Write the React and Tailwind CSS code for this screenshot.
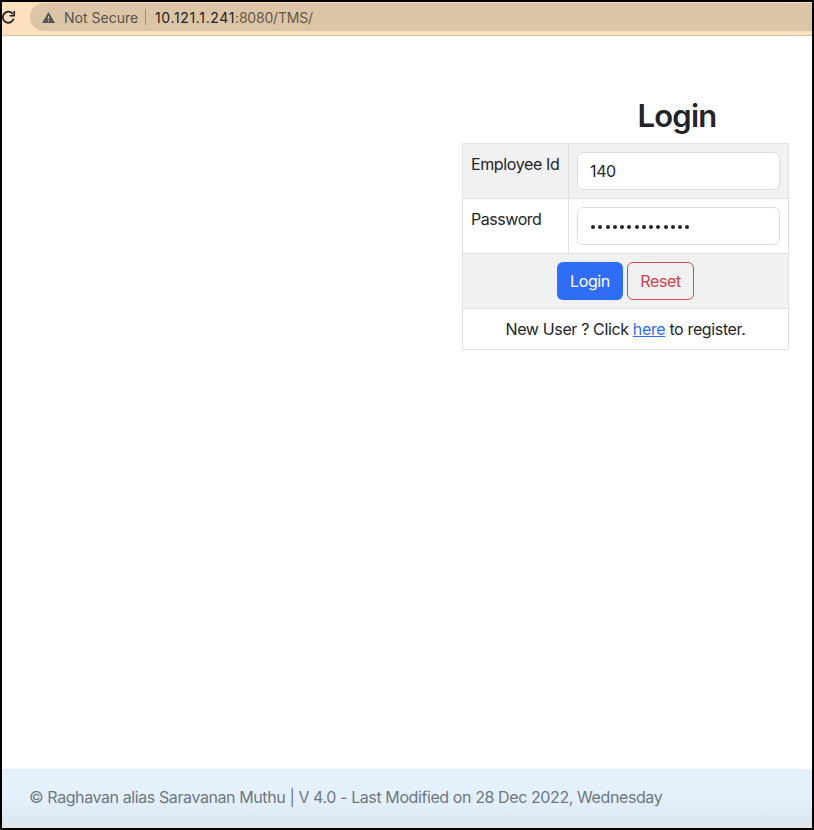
const fieldClass =
  "block h-[38px] w-[203px] rounded-md border border-[#d9dde2] bg-white px-3 text-[16px] leading-6 text-[#212529] outline-none";

function AddressBar() {
  return (
    <div className="flex h-[34px] shrink-0 items-start overflow-hidden border-b border-[#d3c3ac] bg-[#fde0bd]">
      <svg className="-ml-px mt-[7px] h-[16px] w-[15px] shrink-0" viewBox="0 0 15 16" fill="none">
        <path d="M11.8 5A5.5 5.5 0 1 0 12.6 9.8" stroke="#202124" strokeWidth="1.8" />
        <path d="M14 2V7.5H8.5V5.9H12.4V2Z" fill="#202124" />
      </svg>
      <div className="ml-[14px] mt-px flex h-[28px] flex-1 items-center rounded-l-full bg-[#dcc5a7] pl-[12px] text-[14px]">
        <svg className="h-[11px] w-[13px] shrink-0" viewBox="0 0 13 11">
          <path d="M6.5 0L13 11H0Z" fill="#55565a" />
          <path d="M5.9 4H7.1V7.2H5.9ZM5.9 8.2H7.1V9.4H5.9Z" fill="#dcc5a7" />
        </svg>
        <span className="ml-[9px] w-[74px] whitespace-nowrap tracking-[0.02px] text-[#55534f]">Not Secure</span>
        <span className="ml-[7px] h-[16px] w-px bg-[#9c8e7b]" />
        <span className="ml-[9px] whitespace-nowrap tracking-[-0.2px] text-[#65594a]">
          <span className="tracking-[0.65px] text-[#202124]">10.121.1.241</span>:8080/TMS/
        </span>
      </div>
    </div>
  );
}

function LoginForm() {
  return (
    <div className="ml-[460px] mt-[60px] w-[327px]">
      <h1 className="mb-[8px] pl-[103px] text-center text-[31px] font-[560] leading-[39px] tracking-[-0.75px]">
        Login
      </h1>
      <form className="border border-[#dee2e6]">
        <div className="flex h-[55px] border-b border-[#dee2e6] bg-[#f1f1f1]">
          <label className="w-[106px] whitespace-nowrap border-r border-[#dee2e6] pl-[8px] pt-[8px] leading-6">Employee Id</label>
          <div className="p-2"><input className={fieldClass} defaultValue="140" /></div>
        </div>
        <div className="flex h-[55px] border-b border-[#dee2e6]">
          <label className="w-[106px] border-r border-[#dee2e6] pl-[8px] pt-[8px] leading-6 tracking-[-0.45px]">Password</label>
          <div className="p-2">
            <div className={fieldClass + " flex items-center gap-[3.25px] pl-[13px]"}>
              {Array.from({ length: 14 }, (_, i) => (
                <span key={i} className="mt-px size-[4px] rounded-full bg-[#212529]" />
              ))}
            </div>
          </div>
        </div>
        <div className="flex h-[55px] items-center justify-center gap-1 border-b border-[#dee2e6] bg-[#f1f1f1]">
          <button type="button" className="h-[38px] w-[66px] rounded-md bg-[#2f6df6] text-white">Login</button>
          <button type="button" className="h-[38px] w-[67px] rounded-md border border-[#d04a55] text-[#cb414d]">Reset</button>
        </div>
        <p className="flex h-10 items-center justify-center whitespace-pre tracking-[-0.36px]">
          New User ? Click <a href="#" className="text-[#2f6df6] underline">here</a> to register.
        </p>
      </form>
    </div>
  );
}

export default function App() {
  return (
    <div className="flex h-[830px] w-[814px] flex-col overflow-hidden border-2 border-black bg-white font-['Inter',sans-serif] text-[16px] tracking-[-0.38px] text-[#212529]">
      <AddressBar />
      <main className="flex-1">
        <LoginForm />
      </main>
      <footer className="flex h-[56px] shrink-0 items-center whitespace-nowrap bg-linear-to-b from-[#e4f1fc] from-55% to-[#d9e5ef] pl-[27px] tracking-[-0.405px] text-[#6f777e]">
        © Raghavan alias Saravanan Muthu | V 4.0 - Last Modified on 28 Dec 2022, Wednesday
      </footer>
      <div className="h-[3px] shrink-0 bg-[#e8e5e5]" />
    </div>
  );
}
